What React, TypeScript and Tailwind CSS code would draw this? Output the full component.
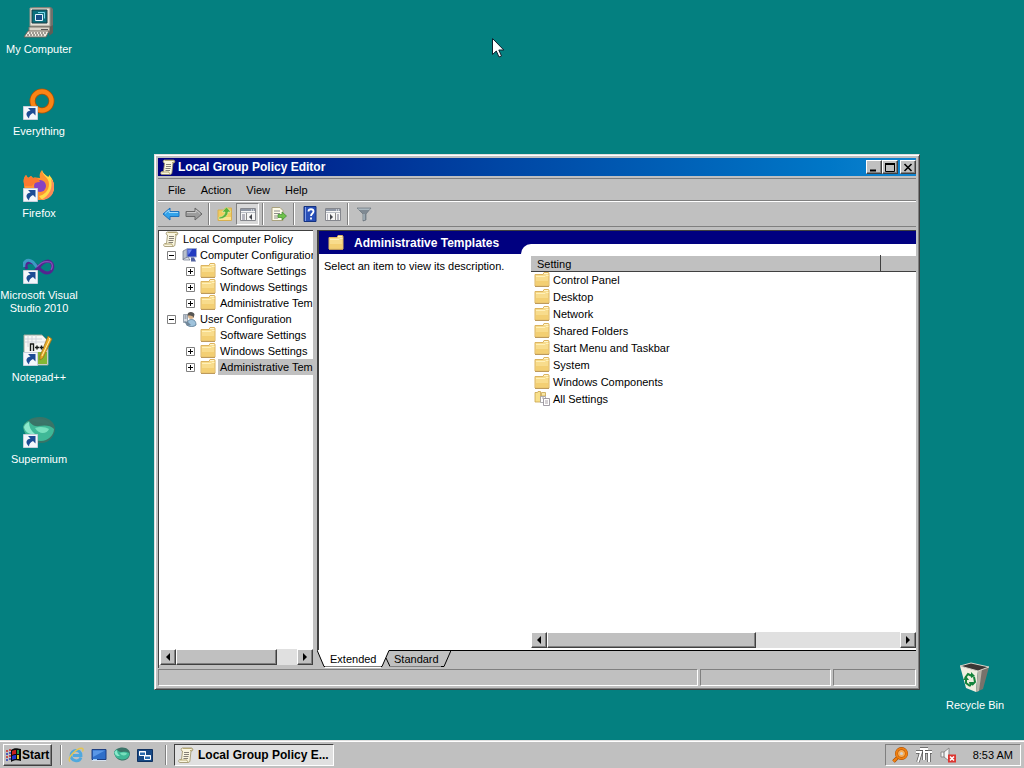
import React, { useState } from "react";
import { clsx } from "clsx";

const raised =
  "border border-t-white border-l-white border-r-[#404040] border-b-[#404040] shadow-[inset_-1px_-1px_0_#808080]";
const sunken =
  "border border-t-[#808080] border-l-[#808080] border-r-white border-b-white";

type IconProps = { className?: string };

/* ---------- small icons ---------- */

function FolderIcon({ className = "size-4" }: IconProps) {
  return (
    <svg viewBox="0 0 16 16" className={className}>
      <path d="M1 2.500h8l1-2h4.500l.5 1V14H1z" fill="#f8dc8c" stroke="#dcb460" />
      <path d="M10 1.500h4" stroke="#fff6cf" />
      <path d="M2 4.500h9l1-1h2.500" stroke="#fff0b8" fill="none" />
      <path d="M2 9h12v4.500H2z" fill="#f1c968" opacity=".7" />
      <path d="M1 14.500h14" stroke="#bd9a5c" />
    </svg>
  );
}

function ScrollIcon({ className = "size-4" }: IconProps) {
  return (
    <svg viewBox="0 0 16 16" className={className}>
      <path d="M4 1h9.500c1.500 0 2 3 0 3H13l-1 9c0 2-1 2.500-2 2.500H2c-1.500 0-2-2.500 0-3h1.500L4.500 4C3 4 2.500 2 4 1z" fill="#faf6df" stroke="#988e66" strokeWidth=".8" />
      <path d="M5 1.500h8.500c1 0 1 2 0 2H12M2 13h7c0 1 .5 2 1.500 2" fill="none" stroke="#b5a874" />
      <path d="M6 5.500h5M6 7.500h5M5.500 9.500h5M5.500 11.500h4.500" stroke="#77736a" strokeWidth=".9" />
    </svg>
  );
}

function ComputerConfigIcon({ className = "size-4" }: IconProps) {
  return (
    <svg viewBox="0 0 16 16" className={className}>
      <path d="M1 4l4-2v9l-4 2z" fill="#b9c0cb" stroke="#656f82" strokeWidth=".7" />
      <path d="M5 1.500h9.500V10H5z" fill="#223bc0" stroke="#9ca9cb" />
      <path d="M6 2.500h4L6.500 8z" fill="#738cf0" />
      <path d="M9 10.500h3l2 4H9z" fill="#5262a0" />
      <path d="M1 12l5-2 2 3H2z" fill="#dfe3ea" stroke="#6c7486" strokeWidth=".7" />
    </svg>
  );
}

function UserConfigIcon({ className = "size-4" }: IconProps) {
  return (
    <svg viewBox="0 0 16 16" className={className}>
      <path d="M1.500 3.500h4v8h-4z" fill="#d7dde4" stroke="#87929e" strokeWidth=".8" />
      <path d="M2.500 5h2M2.500 7h2" stroke="#687584" />
      <path d="M5 14c0-4 2-5.500 4.500-5.500S14 10 14 14c-2 2-7 2-9 0z" fill="#9fc3dc" stroke="#50738f" strokeWidth=".8" />
      <circle cx="9" cy="5" r="3" fill="#d9b48c" />
      <path d="M5.500 4.500C5 0 12 0 12.500 3.500L11.500 7c0-2-2-2.500-6-2.500z" fill="#565553" />
      <path d="M2 10l4 1 3 3-4 1z" fill="#71879a" />
    </svg>
  );
}

function AllSettingsIcon({ className = "size-4" }: IconProps) {
  return (
    <svg viewBox="0 0 16 16" className={className}>
      <path d="M1 1.500h2.500L4 .5h2.500V11H1z" fill="#f8e08c" stroke="#c9a34d" strokeWidth=".8" />
      <path d="M7.500 1.500h4V5h-4z" fill="#f7e6a8" stroke="#c9a34d" strokeWidth=".8" />
      <path d="M6.500 5.500h5v6h-5z" fill="#fff" stroke="#9999a0" strokeWidth=".8" />
      <path d="M9.500 7.500h6v7h-6z" fill="#fff" stroke="#8c8590" strokeWidth=".8" />
      <path d="M11 10h3M11 12h3M8 7h2" stroke="#aaa2a8" />
    </svg>
  );
}

function ArrowIcon({ back = false }: { back?: boolean }) {
  return back ? (
    <svg viewBox="0 0 18 16" className="h-4 w-[18px]">
      <path d="M1 8l7-6v3.500h9v5H8V14z" fill="#33a3ea" stroke="#1e72bd" />
      <path d="M3 7.500L7 4v2.500h9" fill="none" stroke="#a6dcfb" />
    </svg>
  ) : (
    <svg viewBox="0 0 18 16" className="h-4 w-[18px]">
      <path d="M17 8l-7-6v3.500H1v5h9V14z" fill="#9c9c9c" stroke="#686868" />
      <path d="M2 6.500h9V4l4 3.500" fill="none" stroke="#c8c8c8" />
    </svg>
  );
}

function UpFolderIcon() {
  return (
    <svg viewBox="0 0 16 16" className="size-4">
      <path d="M1 4h6l1-2h6.500v12.500H1z" fill="#f1cc60" stroke="#d8b050" />
      <path d="M2 11h12v3H2z" fill="#fbe391" />
      <path d="M2 11c4 0 6-3 6-5H5l4.500-5L14 6h-3c0 4-4 7-9 7z" fill="#5bb33c" stroke="#e5f1b3" strokeWidth=".6" />
    </svg>
  );
}

function PaneIcon({ play = false }: { play?: boolean }) {
  return (
    <svg viewBox="0 0 16 16" className="size-4">
      <path d="M.5 2.500h15v12H.5z" fill="#f6f6f6" stroke="#85878d" />
      <path d="M1 3h14v2H1z" fill="#8d95a4" />
      <path d="M11 4h1M13 4h1" stroke="#fff" />
      <path d="M1 6.500h14" stroke="#b9bdc4" />
      <path d={play ? "M10.500 7v7" : "M6.500 7v7"} stroke="#8c8c8c" />
      <path d={play ? "M12 9h2M12 11h2M12 13h2M2 9h1M2 11h1M2 13h1" : "M2 9h3M2 11h3M2 13h3"} stroke="#778" />
      <path d={play ? "M5 8l3 3-3 3z" : "M12 8l-3 3 3 3z"} fill="#44474e" />
    </svg>
  );
}

function ExportIcon() {
  return (
    <svg viewBox="0 0 16 16" className="size-4">
      <path d="M1 1.500h8l3 3v10H1z" fill="#fdfbe8" stroke="#aaa27e" />
      <path d="M3 5h6M3 7.500h6M3 10h4M3 12h4" stroke="#8f8f8c" />
      <path d="M7 8.500h4V6l4.500 4-4.500 4v-2.500H7z" fill="#6fc24b" stroke="#3e8d2e" strokeWidth=".7" />
    </svg>
  );
}

function HelpIcon() {
  return (
    <svg viewBox="0 0 16 16" className="size-4">
      <path d="M2 .5h12v15H2z" fill="#284fb9" stroke="#14327f" />
      <path d="M3.500 1v14" stroke="#7f9ce6" />
      <path d="M6.500 5.500c0-3 5-3 5 0 0 2-2.500 2-2.500 4.500M9 11.500v2" fill="none" stroke="#fff" strokeWidth="1.800" />
    </svg>
  );
}

function FilterIcon() {
  return (
    <svg viewBox="0 0 16 16" className="size-4">
      <path d="M1 2h14l-5 6v6l-3 1V8z" fill="#7f8992" stroke="#68727b" strokeWidth=".7" />
      <path d="M1.500 2.500h13L13 4H3z" fill="#adb9c0" />
      <path d="M8 8v6" stroke="#b9c8d0" />
    </svg>
  );
}

function WindowsFlag() {
  return (
    <svg viewBox="0 0 16 16" className="size-4 shrink-0">
      <path d="M0 4h2M0 10h2M3 3h2M3 9h2" stroke="#c82828" strokeWidth="1.500" />
      <path d="M0 7h2M0 13h2M3 6h2M3 12h2" stroke="#2838b8" strokeWidth="1.500" />
      <path d="M5 3c3-2 5-2 10-1v12c-4-1-7-1-10 1z" fill="#0b0b0b" />
      <path d="M6 4c1.500-1 2.500-1 4-1v4c-1.500 0-2.500 0-4 1z" fill="#c8201c" />
      <path d="M11 3h2v4h-2z" fill="#21904a" />
      <path d="M6 9c1.500-1 2.500-1 4-1v4c-1.500 0-2.500 0-4 1z" fill="#2335cc" />
      <path d="M11 8h2v4h-2z" fill="#dfc32a" />
    </svg>
  );
}

function IeIcon() {
  return (
    <svg viewBox="0 0 16 16" className="size-4">
      <path d="M13 10.500C11 16 3 14 3 8.500 3 2 13 1.500 13 8.500H5" fill="none" stroke="#50a8dd" strokeWidth="2.800" />
      <path d="M2 14.500C-2 11 10 0 14.500 1.500c1 .5.500 2 0 3" fill="none" stroke="#e3c552" strokeWidth="1.400" />
    </svg>
  );
}

function DesktopIcon() {
  return (
    <svg viewBox="0 0 16 16" className="size-4">
      <path d="M1 2.500h14v10H1z" fill="#2f6fc9" stroke="#1d3f83" />
      <path d="M2 3.500h12L2 10z" fill="#5a97e6" />
      <path d="M1 13.500h14" stroke="#d7e2f1" />
      <path d="M2 12.500h4" stroke="#9dd1ff" />
    </svg>
  );
}

function CascadeIcon() {
  return (
    <svg viewBox="0 0 16 16" className="size-4">
      <path d="M.5 2.500h15v12H.5z" fill="#174a86" stroke="#0f3160" />
      <path d="M2.500 4.500h6v4h-6z" fill="#2c6cae" stroke="#fff" />
      <path d="M7.500 8.500h6v4h-6z" fill="#2c6cae" stroke="#fff" />
      <path d="M2 5h7M7 9h7" stroke="#fff" />
    </svg>
  );
}

function SupermiumIcon({ className = "size-8" }: IconProps) {
  return (
    <svg viewBox="0 0 32 32" className={className}>
      <path d="M0 11C1 6 8 1 17 1s15 6 15 12-5 14-14 14S2 22 0 11z" fill="#397467" />
      <path d="M0 11c1-3 4-6 6-6 2 3 5 6 10 5s12-1 15 3c0 6-6 12-13 12C9 25 2 21 0 11z" fill="#3fb897" />
      <path d="M1 11c1-3 3-4 5-5 0 5 2 9 6 12-4 1-10-1-11-7z" fill="#8ce8cc" />
      <path d="M12 12c5-2 11-1 14 1-2 5-10 6-14-1z" fill="#77dfbd" />
      <path d="M8 4c7-4 17-1 21 6-6-4-13-1-21-6z" fill="#3b756a" />
    </svg>
  );
}

function MagnifierIcon() {
  return (
    <svg viewBox="0 0 16 16" className="size-4">
      <path d="M1.500 14.500L6 10" stroke="#a44a00" strokeWidth="3.500" />
      <path d="M1.500 14.500L6 10" stroke="#f08010" strokeWidth="2.400" />
      <circle cx="9.500" cy="6.500" r="5" fill="#f7ad55" stroke="#a44a00" strokeWidth="3" />
      <circle cx="9.500" cy="6.500" r="5" fill="none" stroke="#f08010" strokeWidth="2.200" />
      <circle cx="9.500" cy="6.500" r="1.600" fill="#d1d1d1" />
    </svg>
  );
}

function SevenTTIcon() {
  return (
    <svg viewBox="0 0 18 16" className="h-4 w-[18px]">
      <path d="M1 5h5L3 15M5 2h8M9 2v11M10 5h7M14 5v10" fill="none" stroke="#555" strokeWidth="3.400" />
      <path d="M1 5h5L3 15M5 2h8M9 2v11M10 5h7M14 5v10" fill="none" stroke="#fff" strokeWidth="2" />
    </svg>
  );
}

function MutedIcon() {
  return (
    <svg viewBox="0 0 17 16" className="h-4 w-[17px]">
      <path d="M1 5h3l5-4v13l-5-4H1z" fill="#f4f4f4" stroke="#8a8a8a" />
      <path d="M4 5v5" stroke="#777" />
      <path d="M8 7.500h8v8H8z" fill="#dc3530" />
      <path d="M10 9.500l4 4M14 9.500l-4 4" stroke="#fff" strokeWidth="1.600" />
    </svg>
  );
}

/* ---------- desktop icons ---------- */

function ShortcutMark() {
  return (
    <g>
      <path d="M.5 18.500h14v13H.5z" fill="#f4f7fb" stroke="#c8d0dc" />
      <path d="M5 20h7.500v7.500L10 25C7.500 26 6 28 6 30.500c-4-4-3-7 1.500-8z" fill="#1d4c94" />
    </g>
  );
}

function MyComputerIcon() {
  return (
    <svg viewBox="0 0 32 32" className="size-8">
      <path d="M8 2l3-1h17l2 2v19l-3 3H8z" fill="#71706b" />
      <path d="M7 2h20v18H7z" fill="#e5e2d8" stroke="#99968b" />
      <path d="M9 4h15v13H9z" fill="#0b6e7c" stroke="#173d44" />
      <path d="M12.500 8.500h7v6h-7z" fill="#194f88" stroke="#e6f7ff" />
      <path d="M15 6.500h6.500v6" fill="none" stroke="#7fd8ed" />
      <path d="M6 21h21v5H6z" fill="#d9d5c9" stroke="#7b776d" />
      <path d="M27 21l3-2v8l-4 3z" fill="#605d56" />
      <path d="M18 23.500h7" stroke="#555" />
      <path d="M5 25h21l-3 6H1z" fill="#f0ece2" stroke="#6d675d" />
      <path d="M6 27h17M4 29h18" stroke="#504b45" strokeWidth="1.200" strokeDasharray="2 1" />
    </svg>
  );
}

function EverythingIcon() {
  return (
    <svg viewBox="0 0 32 32" className="size-8">
      <path d="M2 29l9-9" stroke="#b55300" strokeWidth="5" />
      <circle cx="19" cy="13" r="9.500" fill="none" stroke="#a95106" strokeWidth="6" />
      <circle cx="19" cy="13" r="9.500" fill="none" stroke="#fa8415" strokeWidth="4.400" />
      <ShortcutMark />
    </svg>
  );
}

function FirefoxIcon() {
  return (
    <svg viewBox="0 0 32 32" className="size-8">
      <path d="M1 14C0 10 1 7 3 5l2 3 3-2 2 2c3-1 5 0 7 0-1-3 0-6 2-8 1 4 4 5 6 7 1 0 1-1 1-2 4 4 5 8 5 12 0 8-6 13-15 13S1 24 1 14z" fill="#ff9333" />
      <path d="M19 0c0 6 7 7 7 14 0 7-5 11-10 12 2 3 4 4 4 4 8-2 11-8 11-13 0-5-2-9-5-12 0 1 0 2-1 2-2-2-5-3-6-7z" fill="#ffdc49" />
      <path d="M28 9c2 9-1 16-10 21 8 0 13-5 13-13 0-4-1-6-3-8z" fill="#fb8a58" />
      <circle cx="17" cy="16" r="6" fill="#8643c4" />
      <path d="M1 14C0 10 1 7 3 5l2 3 3-2 2 2c3-1 6 0 7 4-4 0-6 1-8 4H1z" fill="#fb7a30" />
      <ShortcutMark />
    </svg>
  );
}

function VisualStudioIcon() {
  return (
    <svg viewBox="0 0 32 32" className="size-8">
      <path d="M4 17C1 12 5 9 10 11c6 3 8 10 14 10 7 0 8-11 1-12-7 0-10 9-14 11" fill="none" stroke="#54258f" strokeWidth="3" />
      <path d="M1 15C0 10 4 7 8 9c3 1 4 4 6 6" fill="none" stroke="#3c9bc4" strokeWidth="3" />
      <path d="M14 15c4-5 9-6 13-5 3 1 3 5 1 8" fill="none" stroke="#8553b9" strokeWidth="1.200" />
      <ShortcutMark />
    </svg>
  );
}

function NotepadIcon() {
  return (
    <svg viewBox="0 0 32 32" className="size-8">
      <path d="M1 1h18l6 6v24H1z" fill="#f7f8f5" stroke="#9ba798" />
      <path d="M2 5h17M2 8h20M5 1v12M9 1v9M13 1v9" stroke="#d1d5dc" />
      <path d="M14 18h10v12H14z" fill="#83b734" />
      <path d="M25 2l4 3-9 19-3 2v-4z" fill="#e8aa27" stroke="#906d20" strokeWidth=".7" />
      <path d="M26 4l1 1-8 17" fill="none" stroke="#fff2a9" />
      <path d="M7.500 17v-7h3v7M12 13.500h4M14 11.500v4M16.500 13.500h4M18.500 11.500v4" fill="none" stroke="#181b18" strokeWidth="1.400" />
      <ShortcutMark />
    </svg>
  );
}

function SupermiumShortcut() {
  return (
    <span className="relative block size-8">
      <SupermiumIcon />
      <svg viewBox="0 0 32 32" className="absolute inset-0 size-8">
        <ShortcutMark />
      </svg>
    </span>
  );
}

function RecycleBinIcon() {
  return (
    <svg viewBox="0 0 32 32" className="size-8">
      <path d="M1 4l18 5-2 21-10-4z" fill="#f0eee0" />
      <path d="M19 9l11-4-6 22-7 3z" fill="#77726b" />
      <path d="M19 9l4-2-3 22-3 1z" fill="#b8b4a9" />
      <path d="M1 4l11-3 18 4-11 4z" fill="#3b3634" stroke="#d8d5ca" />
      <path d="M6 16l3-4 4 2M15 15l1 5-3 3M11 24l-4-3 0-4" fill="none" stroke="#14833b" strokeWidth="2" />
      <path d="M12 10l4 4-4 2zM15 20l-4 5-1-5zM4 18l3-4 3 4z" fill="#14833b" />
    </svg>
  );
}

const shortcuts = [
  { label: "My Computer", icon: <MyComputerIcon /> },
  { label: "Everything", icon: <EverythingIcon /> },
  { label: "Firefox", icon: <FirefoxIcon /> },
  { label: "Microsoft Visual Studio 2010", icon: <VisualStudioIcon /> },
  { label: "Notepad++", icon: <NotepadIcon /> },
  { label: "Supermium", icon: <SupermiumShortcut /> },
];

function DesktopShortcut({ label, icon }: { label: string; icon: React.ReactNode }) {
  return (
    <button className="flex h-[82px] w-[78px] flex-col items-center gap-[5px] pt-[6px] text-white">
      {icon}
      <span className="leading-[13px]">{label}</span>
    </button>
  );
}

/* ---------- window parts ---------- */

function ScrollBar({ thumb }: { thumb: string }) {
  return (
    <div className="flex h-4 shrink-0 bg-[#e0e0e0]">
      <button aria-label="Scroll left" className={clsx("flex w-4 shrink-0 items-center justify-center bg-[#c0c0c0]", raised)}>
        <svg viewBox="0 0 4 8" className="h-2 w-1"><path d="M4 0v8L0 4z" /></svg>
      </button>
      <div className="flex flex-1">
        <div className={clsx("bg-[#c0c0c0]", raised, thumb)} />
      </div>
      <button aria-label="Scroll right" className={clsx("flex w-4 shrink-0 items-center justify-center bg-[#c0c0c0]", raised)}>
        <svg viewBox="0 0 4 8" className="h-2 w-1"><path d="M0 0v8l4-4z" /></svg>
      </button>
    </div>
  );
}

function Expander({ open, onClick }: { open: boolean; onClick?: () => void }) {
  return (
    <button onClick={onClick} aria-label={open ? "Collapse" : "Expand"} className="size-[9px] shrink-0">
      <svg viewBox="0 0 9 9" className="size-[9px]">
        <path d="M.5.5h8v8h-8z" fill="#fff" stroke="#808080" />
        <path d={open ? "M2 4.500h5" : "M2 4.500h5M4.500 2v5"} stroke="#000" />
      </svg>
    </button>
  );
}

const tree = [
  {
    label: "Computer Configuration",
    icon: <ComputerConfigIcon className="size-4 shrink-0" />,
    children: [
      { label: "Software Settings", expandable: true },
      { label: "Windows Settings", expandable: true },
      { label: "Administrative Tem", expandable: true },
    ],
  },
  {
    label: "User Configuration",
    icon: <UserConfigIcon className="size-4 shrink-0" />,
    children: [
      { label: "Software Settings", expandable: false },
      { label: "Windows Settings", expandable: true },
      { label: "Administrative Tem", expandable: true, selected: true },
    ],
  },
];

function PolicyTree() {
  const [closed, setClosed] = useState<string[]>([]);

  const toggle = (label: string) =>
    setClosed((c) => (c.includes(label) ? c.filter((l) => l !== label) : [...c, label]));

  return (
    <div className="flex w-[155px] shrink-0 flex-col border-t border-l border-[#404040] bg-white pl-px">
      <ul className="flex-1 overflow-hidden whitespace-nowrap">
        <li className="flex h-4 items-center gap-1 pl-[3px]">
          <ScrollIcon className="size-4 shrink-0" />
          Local Computer Policy
        </li>
        {tree.map((node) => (
          <li key={node.label}>
            <div className="flex h-4 items-center pl-[7px]">
              <Expander open={!closed.includes(node.label)} onClick={() => toggle(node.label)} />
              <span className="flex items-center gap-[2px] pl-[6px]">
                {node.icon}
                {node.label}
              </span>
            </div>
            {!closed.includes(node.label) && (
              <ul>
                {node.children.map((child) => (
                  <li key={child.label} className="flex h-4 items-center pl-[26px]">
                    {child.expandable ? <Expander open={false} /> : <span className="w-[9px] shrink-0" />}
                    <FolderIcon className="ml-[5px] size-4 shrink-0" />
                    <span className={clsx("ml-[2px] h-4 flex-1 pl-[2px] leading-4", child.selected && "bg-[#c0c0c0]")}>
                      {child.label}
                    </span>
                  </li>
                ))}
              </ul>
            )}
          </li>
        ))}
      </ul>
      <ScrollBar thumb="w-[101px]" />
      <div className="-ml-px h-[3px] bg-[#c0c0c0]" />
    </div>
  );
}

const settings = [
  "Control Panel",
  "Desktop",
  "Network",
  "Shared Folders",
  "Start Menu and Taskbar",
  "System",
  "Windows Components",
  "All Settings",
];

function SettingsTable() {
  return (
    <table className="w-full table-fixed border-collapse">
      <colgroup>
        <col />
        <col className="w-[36px]" />
      </colgroup>
      <thead>
        <tr className="h-[17px] bg-[#c0c0c0] text-left shadow-[inset_0_1px_0_#fff,inset_0_-1px_0_#404040]">
          <th className="border-r border-[#404040] p-0 pl-[6px] leading-4 font-normal">Setting</th>
          <th className="p-0" />
        </tr>
      </thead>
      <tbody>
        {settings.map((name) => (
          <tr key={name} className="h-[17px]">
            <td className="p-0">
              <span className="flex h-[17px] gap-[3px] pl-[3px] leading-[17px]">
                {name === "All Settings" ? <AllSettingsIcon /> : <FolderIcon />}
                {name}
              </span>
            </td>
            <td className="p-0" />
          </tr>
        ))}
      </tbody>
    </table>
  );
}

function ViewTabs() {
  return (
    <div className="flex h-[18px] bg-[#c0c0c0]" role="tablist">
      <button role="tab" aria-selected="true" className="flex bg-white">
        <svg viewBox="0 0 8 18" className="h-[18px] w-2">
          <path d="M0 0v18h8z" fill="#c0c0c0" />
          <path d="M0 0l7 16.500h1" fill="none" stroke="#000" />
        </svg>
        <span className="h-[17px] w-[56px] border-b border-[#808080] pl-[5px] text-left leading-[18px]">Extended</span>
      </button>
      <button role="tab" aria-selected="false" className="flex">
        <svg viewBox="0 0 12 18" className="h-[18px] w-3">
          <path d="M0 0h8L1 16.500H0z" fill="#fff" />
          <path d="M0 16.500h1L8 .5h4M5 8l4 8.500" fill="none" stroke="#000" />
          <path d="M9 16.500h3" stroke="#808080" />
        </svg>
        <span className="h-[17px] w-[48px] border-t border-b border-t-black border-b-[#808080] pl-px text-left leading-4">Standard</span>
        <svg viewBox="0 0 10 18" className="h-[18px] w-[10px]">
          <path d="M0 16.500h3L10 .5H0" fill="none" stroke="#000" />
        </svg>
      </button>
      <div className="flex-1 border-t border-black" />
    </div>
  );
}

function DetailsPane() {
  return (
    <div className="flex min-w-0 flex-1 flex-col">
      <div className="flex min-h-0 flex-1 border-t border-l-2 border-[#404040] bg-white">
        <section className="w-[202px] shrink-0">
          <h2 className="flex h-[23px] items-center gap-[10px] bg-[#000080] pt-px pl-[9px] text-[12px] font-bold text-white">
            <FolderIcon />
            Administrative Templates
          </h2>
          <p className="px-[5px] py-[6px]">Select an item to view its description.</p>
        </section>
        <section className="flex min-w-0 flex-1 flex-col bg-[#000080] pt-[13px]">
          <div className="flex flex-1 flex-col rounded-tl-[10px] bg-white pt-[11px] pb-[2px] pl-[10px]">
            <div className="flex-1">
              <SettingsTable />
            </div>
            <ScrollBar thumb="w-[209px]" />
          </div>
        </section>
      </div>
      <ViewTabs />
    </div>
  );
}

function Divider() {
  return <span className="mx-[3px] h-[22px] w-[2px] border-l border-l-[#808080] border-r border-r-white" />;
}

function ToolButton({ label, pressed = false, children }: { label: string; pressed?: boolean; children: React.ReactNode }) {
  return (
    <button
      aria-label={label}
      className={clsx("flex h-[22px] w-[23px] shrink-0 items-center justify-center", pressed && clsx(sunken, "bg-[#d8d8d8]"))}
    >
      {children}
    </button>
  );
}

function CaptionButton({ label, children }: { label: string; children: React.ReactNode }) {
  return (
    <button aria-label={label} className={clsx("flex h-[14px] w-4 items-center justify-center bg-[#c0c0c0]", raised)}>
      <svg viewBox="0 0 10 9" className="h-[9px] w-[10px]" fill="none" stroke="#000">
        {children}
      </svg>
    </button>
  );
}

function PolicyWindow() {
  return (
    <main className="absolute top-[154px] right-[104px] bottom-[50px] left-[154px] flex flex-col border border-t-[#dfdfdf] border-r-[#404040] border-b-[#404040] border-l-[#dfdfdf] bg-[#c0c0c0] p-[3px] shadow-[inset_1px_1px_0_#fff,inset_-1px_-1px_0_#808080]">
      <header className="flex h-[18px] shrink-0 items-center bg-linear-to-r from-[#000080] to-[#1084d0] pl-[2px]">
        <ScrollIcon />
        <h1 className="flex-1 pl-[2px] text-[12px] font-bold text-white">Local Group Policy Editor</h1>
        <CaptionButton label="Minimize">
          <path d="M1 7.500h6" strokeWidth="2" />
        </CaptionButton>
        <CaptionButton label="Maximize">
          <path d="M.5 1v7.500h9V1M0 1h10" />
          <path d="M0 1h10" strokeWidth="2" />
        </CaptionButton>
        <span className="w-[2px]" />
        <CaptionButton label="Close">
          <path d="M1.500 1l7 7M8.500 1l-7 7" strokeWidth="1.600" />
        </CaptionButton>
      </header>

      <nav className="mt-[2px] flex h-[23px] shrink-0 items-center gap-[15px] border-y border-y-[#808080] pt-px pl-[10px]">
        {["File", "Action", "View", "Help"].map((item) => (
          <button key={item}>{item}</button>
        ))}
      </nav>

      <div className="flex h-[26px] shrink-0 items-center border-t border-b border-t-white border-b-[#808080] pl-px">
        <ToolButton label="Back"><ArrowIcon back /></ToolButton>
        <ToolButton label="Forward"><ArrowIcon /></ToolButton>
        <Divider />
        <ToolButton label="Up one level"><UpFolderIcon /></ToolButton>
        <ToolButton label="Show console tree" pressed><PaneIcon /></ToolButton>
        <Divider />
        <ToolButton label="Export list"><ExportIcon /></ToolButton>
        <Divider />
        <ToolButton label="Help topics"><HelpIcon /></ToolButton>
        <ToolButton label="Show action pane"><PaneIcon play /></ToolButton>
        <Divider />
        <ToolButton label="Filter"><FilterIcon /></ToolButton>
      </div>

      <div className="mt-[3px] flex min-h-0 flex-1 gap-1">
        <PolicyTree />
        <DetailsPane />
      </div>

      <footer className="flex h-[18px] shrink-0 gap-[2px] pt-px">
        <div className={clsx("flex-1", sunken)} />
        <div className={clsx("w-[131px]", sunken)} />
        <div className={clsx("w-[83px]", sunken)} />
      </footer>
    </main>
  );
}

function Grip() {
  return <span className="mx-[3px] h-5 w-[2px] border-l border-l-[#808080] border-r border-r-white" />;
}

function Taskbar() {
  return (
    <footer className="flex h-7 shrink-0 items-center border-t border-[#dfdfdf] bg-[#c0c0c0] px-[3px] pt-px shadow-[inset_0_1px_0_#fff]">
      <button className={clsx("mr-[5px] flex h-[22px] w-[49px] items-center pl-[2px] text-[12px] font-bold", raised)}>
        <WindowsFlag />
        Start
      </button>
      <Grip />
      <div className="flex w-[97px] items-center gap-[7px] pl-[3px]">
        <button aria-label="Internet Explorer"><IeIcon /></button>
        <button aria-label="Show Desktop"><DesktopIcon /></button>
        <button aria-label="Supermium"><SupermiumIcon className="size-4" /></button>
        <button aria-label="Switch between windows"><CascadeIcon /></button>
      </div>
      <Grip />
      <button className="ml-1 flex h-[22px] w-[160px] items-center gap-1 border border-t-[#404040] border-r-white border-b-white border-l-[#404040] bg-[#e0e0e0] pl-[3px] text-[12px] font-bold">
        <ScrollIcon className="size-4 shrink-0" />
        Local Group Policy E...
      </button>
      <div className={clsx("ml-auto flex h-[22px] items-center gap-[7px] pr-[7px] pl-[6px]", sunken)}>
        <MagnifierIcon />
        <SevenTTIcon />
        <MutedIcon />
        <time className="pl-[9px]">8:53 AM</time>
      </div>
    </footer>
  );
}

export default function App() {
  return (
    <div className="flex h-screen min-h-[480px] cursor-default flex-col overflow-hidden bg-[#048080] font-['Liberation_Sans',Arial,sans-serif] text-[11px] leading-[13px] text-black select-none">
      <div className="relative flex-1">
        <div className="flex flex-col">
          {shortcuts.map((s) => (
            <DesktopShortcut key={s.label} {...s} />
          ))}
        </div>
        <div className="absolute right-[10px] bottom-[2px]">
          <DesktopShortcut label="Recycle Bin" icon={<RecycleBinIcon />} />
        </div>
        <PolicyWindow />
        <svg viewBox="0 0 12 20" className="absolute top-[38px] left-[492px] h-5 w-3">
          <path d="M.5.5v16l3.800-3.500 2.700 6 2.500-1-2.700-6h5z" fill="#fff" stroke="#10202c" />
        </svg>
      </div>
      <Taskbar />
    </div>
  );
}
